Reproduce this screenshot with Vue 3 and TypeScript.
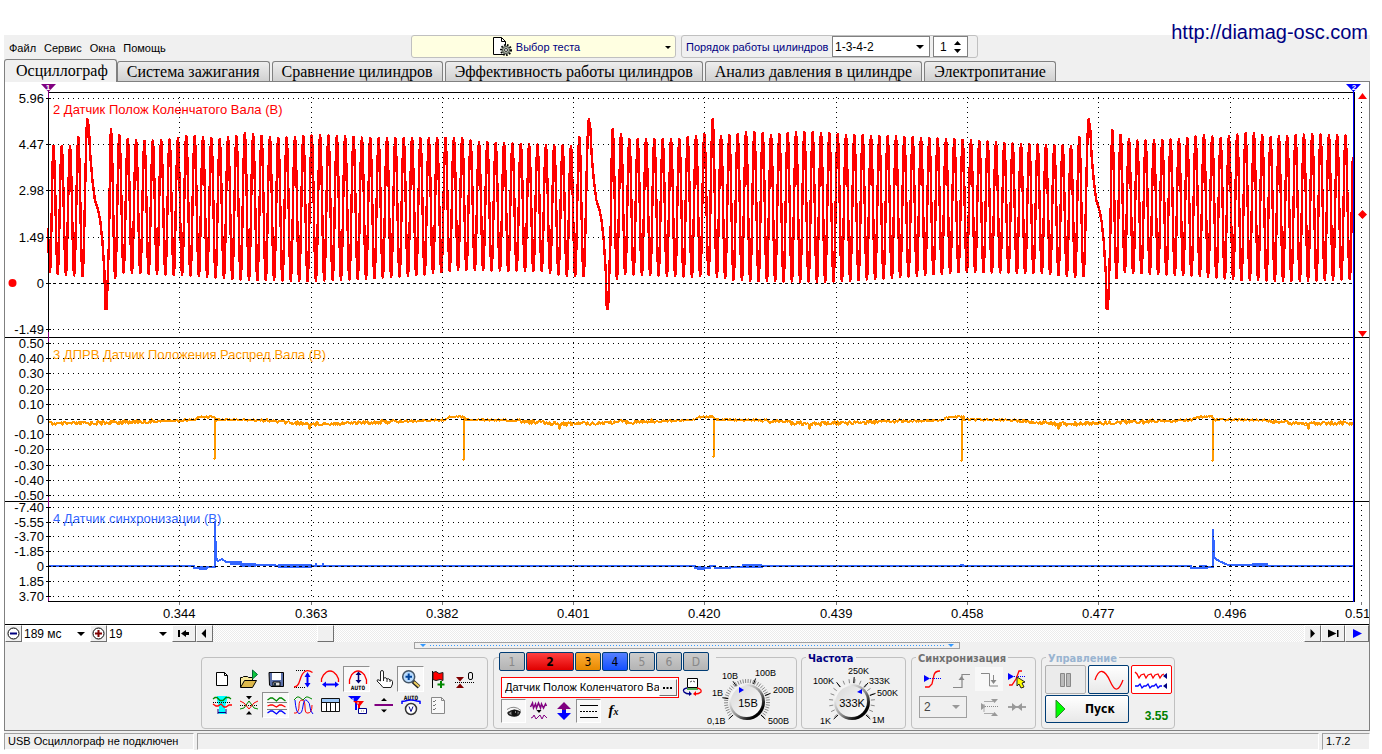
<script setup lang="ts">
import { ref } from 'vue'

type Point = [number, number]

const tabs = [
  'Осциллограф',
  'Система зажигания',
  'Сравнение цилиндров',
  'Эффективность работы цилиндров',
  'Анализ давления в цилиндре',
  'Электропитание',
]
const activeTab = ref(0)
const menus = ['Файл', 'Сервис', 'Окна', 'Помощь']

/* ---------- chart scales ---------- */
const left = 48
const right = 1354
const panels = [
  { top: 97, bottom: 334, zero: 283, ticks: [[98, '5.96'], [144, '4.47'], [190, '2.98'], [237, '1.49'], [283, '0'], [329, '-1.49']] },
  { top: 342, bottom: 499, zero: 419, ticks: [[343, '0.50'], [358, '0.40'], [373, '0.30'], [389, '0.20'], [404, '0.10'], [419, '0'], [434, '-0.10'], [449, '-0.20'], [465, '-0.30'], [480, '-0.40'], [495, '-0.50']] },
  { top: 505, bottom: 600, zero: 566, ticks: [[507, '-7.40'], [522, '-5.55'], [536, '-3.70'], [551, '-1.85'], [566, '0'], [581, '1.85'], [596, '3.70']] },
] as { top: number; bottom: number; zero: number; ticks: [number, string][] }[]
const times: [number, string][] = [
  [179, '0.344'], [311, '0.363'], [442, '0.382'], [573, '0.401'], [704, '0.420'],
  [836, '0.439'], [967, '0.458'], [1098, '0.477'], [1230, '0.496'], [1361, '0.51'],
]

/* ---------- signals ---------- */
const lerp = (table: Point[], x: number): number => {
  for (let i = 1; i < table.length; i++) {
    const [x0, y0] = table[i - 1]
    const [x1, y1] = table[i]
    if (x <= x1) return y0 + ((y1 - y0) * (x - x0)) / (x1 - x0)
  }
  return table[table.length - 1][1]
}
const highs: Point[] = [
  [48, 145], [71, 145], [78, 137], [87, 118], [111, 128], [119, 134], [128, 138], [140, 140], [165, 139], [178, 137],
  [186, 135], [195, 135], [220, 138], [236, 135], [245, 132], [262, 135], [280, 137], [320, 134], [370, 137], [462, 137],
  [475, 141], [530, 143], [571, 145], [579, 137], [588, 118], [613, 128], [621, 133], [629, 138], [680, 138], [704, 133],
  [722, 135], [738, 133], [746, 131], [756, 131], [772, 134], [800, 131], [830, 132], [845, 134], [885, 135], [950, 138],
  [1020, 143], [1071, 145], [1079, 137], [1088, 118], [1112, 129], [1121, 134], [1129, 138], [1140, 140], [1180, 138],
  [1203, 134], [1220, 137], [1245, 132], [1254, 132], [1270, 136], [1312, 133], [1354, 135],
]
const lows: Point[] = [
  [48, 273], [65, 276], [82, 277], [115, 279], [124, 273], [150, 275], [200, 277], [245, 281], [310, 282], [360, 280],
  [420, 276], [460, 271], [540, 272], [567, 277], [583, 277], [617, 280], [625, 275], [650, 276], [692, 278], [709, 276],
  [734, 281], [752, 282], [830, 283], [890, 279], [960, 273], [1040, 274], [1075, 278], [1083, 277], [1117, 279],
  [1125, 273], [1150, 275], [1200, 277], [1240, 281], [1300, 282], [1354, 280],
]
const peaks: number[] = [53.5, 61.7, 70, 78.3]
for (let k = 0; k <= 56; k++) peaks.push(111 + k * 8.363)
for (let k = 0; k <= 56; k++) peaks.push(612.7 + k * 8.332)
for (let k = 0; k <= 29; k++) peaks.push(1112.3 + k * 8.33)
const gaps = [87.4, 588.8, 1088.7]

const crankPath = (): string => {
  const pts: Point[] = [[48, 228], [49, 262], [50, 272]]
  const curve = (a: Point, b: Point) => {
    for (let i = 0; i <= 8; i++) {
      const t = (1 - Math.cos((Math.PI * i) / 8)) / 2
      pts.push([a[0] + ((b[0] - a[0]) * i) / 8, a[1] + (b[1] - a[1]) * t])
    }
  }
  let last: Point = [50, 272]
  peaks.forEach((x, i) => {
    const top: Point = [x, Math.abs(x - 713) < 3 ? 119 : lerp(highs, x) + 1]
    curve(last, top)
    const next = peaks[i + 1]
    const gap = gaps.find(g => g > x && next !== undefined && g < next)
    const lowX = x + 4.2
    const low: Point = [lowX, lerp(lows, lowX) - 1]
    curve(top, low)
    last = low
    if (gap !== undefined) {
      curve(low, [gap, 119])
      const drop: Point[] = [[1.5, 128], [3, 157], [5, 180], [7.5, 200], [11, 211], [13, 222], [15, 241], [17, 272], [18, 309], [19.3, 309], [20.6, 272]]
      drop.forEach(([dx, y]) => pts.push([gap + dx, y]))
      last = [gap + 20.8, 262]
    }
  })
  return 'M' + pts.filter(p => p[0] <= 1353).map(p => `${p[0].toFixed(1)} ${p[1].toFixed(1)}`).join('L')
}

const noise = (x: number): number => {
  const v = Math.sin(x * 12.9898) * 43758.5453
  return v - Math.floor(v) - 0.5
}
const camSpikes: Point[] = [[214, 459], [463, 460], [713, 457], [961, 461], [1212, 461]]
const camPath = (): string => {
  const pts: Point[] = []
  for (let x = 48; x <= 1353; x++) {
    const phase = (((x - 214.5) % 249.6) + 249.6) % 249.6
    const base = lerp([[0, 419.5], [40, 420], [96, 424], [130, 423], [200, 421], [228, 420], [234, 417], [249.6, 416.5]], phase)
    let y = base + noise(x) * (phase > 50 && phase < 190 ? 4 : 2)
    if (Math.round(phase) === 95 && x > 200) y = 429
    const spike = camSpikes.find(s => s[0] === x)
    pts.push([x + 0.5, y])
    if (spike) pts.push([x + 0.5, spike[1]], [x + 1, 420])
  }
  return 'M' + pts.map(p => `${p[0]} ${p[1].toFixed(1)}`).join('L')
}
const syncPath =
  'M48 566H194v2h13v-1h8V522L216 558L218 561L222 559L226 562L238 563L250 564.500H275V566H695v2h15v-2H715v2h15v-1h32v-1H961v-1h2v1H1191v2h16v-1h6V530L1214.500 558L1219 561L1228 565H1253V566H1353'
const syncBands = [[199, 8, 2], [230, 12, -3], [240, 16, -1], [278, 18, 0], [296, 16, 0], [315, 2, -1], [322, 2, -1], [697, 8, 2], [742, 20, 0], [1199, 8, 1], [1252, 16, -1]]
const redLine = crankPath()
const camLine = camPath()

/* ---------- toolbar ---------- */
const icons: Record<string, string> = {
  new: '<path d="M5.500 4.500h8l3 3v10h-11z" fill="#fff" stroke="#000"/><path d="M13.500 4.500v3h3" fill="none" stroke="#000"/>',
  open: '<path d="M2.500 19V9.500h2l1-1h4l1 1h4V12" fill="#f5e79a" stroke="#000"/><path d="M2.500 19.500l4-7h12l-4 7z" fill="#ddb84a" stroke="#000"/><path d="M14.500 2v9l5-4.500z" fill="#0ac83c" stroke="#063"/>',
  save: '<path d="M4 4.500h14.500v14H6L4.500 17z" fill="#5b6fa8" stroke="#000"/><path d="M7 5h9v7H7z" fill="#fff"/><path d="M8 14h7v4H8z" fill="#ddd" stroke="#000"/><path d="M9 15h2v3H9z" fill="#234"/>',
  rise: '<path d="M4 2.500h10M2 19.500h12" stroke="#000" stroke-dasharray="1 1"/><path d="M2 19q4 0 6-7t5-8.500q3-2 7.500 1" fill="none" stroke="#f00" stroke-width="1.300"/><path d="M15.500 6v11" stroke="#00f" stroke-width="2"/><path d="M12.500 9l3-5 3 5zM12.500 15l3 4.500 3-4.500z" fill="#00f"/>',
  span: '<path d="M2.500 14V11l2-4 3-3q3.500-2 7 0l3 3 2 4v3" fill="none" stroke="#f00" stroke-width="1.300"/><path d="M6 16.500h11" stroke="#00f" stroke-width="2"/><path d="M7 13.500l-4 3 4 3zM16 13.500l4 3-4 3z" fill="#00f"/>',
  auto: '<path d="M3.500 16v-4l2-5q6.500-8 13 0l2 5v4" fill="none" stroke="#f00" stroke-width="1.300"/><path d="M12.500 5v9" stroke="#007" stroke-width="1.500"/><path d="M9.500 7l3-3.500 3 3.500zM9.500 12l3 3.500 3-3.500z" fill="#007"/><text x="12" y="22" text-anchor="middle">AUTO</text>',
  hand: '<path d="M7.500 13V4q0-1.500 1.500-1.500T10.500 4v6q3-1 3.500 1 2-1 3 1 2-.5 2.500 1.500V16l-1.500 3.500h-8L8 17l-4-4q0-2 2-1z" fill="#fff" stroke="#222"/><path d="M10.500 10v3M14 11v3M17 12v2" stroke="#222"/>',
  zoom: '<path d="M13 13.500l6 5.500" stroke="#222" stroke-width="4"/><path d="M14 14l5 4.500" stroke="#f0d060" stroke-width="2"/><circle cx="8.700" cy="8.700" r="6" fill="#b9dcff" stroke="#456" stroke-width="1.500"/><path d="M8.700 5.500v6.500M5.500 8.700h6.500" stroke="#00449c" stroke-width="2"/>',
  flag: '<path d="M5.500 3v17" stroke="#000"/><path d="M6 4.500l3-1 3 2 4-1v8l-3-1-4 1-3-1z" fill="#f00" stroke="#222"/><path d="M14 13v7M10.500 16.500h7" stroke="#080" stroke-width="2"/>',
  zero: '<path d="M1 14.500h20" stroke="#000" stroke-dasharray="1 1"/><path d="M2 9h8l-4 4.500zM2 20h8l-4-4.500z" fill="#800000"/><rect x="14.500" y="4.500" width="4" height="7" rx="1.500" fill="none" stroke="#000"/>',
  band: '<path d="M6 2h10v4l-2 7v7H8v-7L6 6z" fill="#0ff"/><path d="M2 8.500h18" stroke="#000" stroke-dasharray="1 1"/><path d="M2 5l2-1.500h2l3 3h3l3-3h3l2 1.500" fill="none" stroke="#080" stroke-width="1.300"/><path d="M2 10l3 2h2l3-2 3 3h2l3-2h3" fill="none" stroke="#f00" stroke-width="1.300"/><path d="M7 15v5M15 15v5M7 18.500h8" stroke="#008"/>',
  cross: '<path d="M2 11.500h18" stroke="#000" stroke-dasharray="1 1"/><path d="M2 15l4-1 5-7 5 7 4 1" fill="none" stroke="#080"/><path d="M2 7l4 2 5 6 5-6 4-2" fill="none" stroke="#f00"/><path d="M8 2h6l-3 3.500zM8 20.500h6l-3-3.500z" fill="#000"/>',
  waves: '<path d="M2.500 8.500h19M2.500 15.500h19" stroke="#000" stroke-dasharray="1 1"/><g fill="none" stroke-width="1.300"><path d="M2.500 6l3-2h2l4 3 3-3h2l4 3" stroke="#080"/><path d="M2.500 12l3-1h2l4 2 3-2h2l4 2" stroke="#f00"/><path d="M2.500 19l3-2h2l4 3 3-3h2l4 3" stroke="#00f"/></g>',
  overlap: '<g fill="none"><path d="M2 6l3-3h2l4 3 3-3h2l4 2" stroke="#080"/><path d="M2 19h2q3-1 3-7t3-6q3 0 3 7t3 6q4 0 4-8" stroke="#f00"/><path d="M3 6q1 13 4 13.500T11 12t4-5.500T18 13t3 7" stroke="#00f"/></g>',
  table: '<path d="M2.500 4.500h18v13h-18z" fill="#fff" stroke="#111"/><path d="M3 5h17v3H3z" fill="#9cc8f8"/><path d="M3 8.500h17M7.500 8v9M11.500 8v9M16.500 8v9" stroke="#111"/>',
  marks: '<path d="M2 2h13l-4 5v9H9V8z" fill="#00f"/><path d="M7 7h11l-4 5v4h-2v-5z" fill="#f00"/><path d="M7 4v3M12 8v2" stroke="#fff"/><path d="M12.500 14.500h8v5h-8z" fill="#fff" stroke="#008"/><path d="M15 17h3" stroke="#888" stroke-dasharray="1 1"/>',
  line: '<path d="M1.500 11H20" stroke="#800080" stroke-width="2"/><path d="M8 7h6l-3-3zM8 15.500h6l-3 3z" fill="#000"/>',
  dial: '<text x="11" y="6" text-anchor="middle">AUTO</text><path d="M2 10V7.500l3-.5q6-2 12 0l3 .5V10" fill="none" stroke="#00f" stroke-width="1.500"/><circle cx="11" cy="15" r="5.500" fill="#fff" stroke="#333" stroke-width="1.500"/><path d="M9 12.500l2 5 2-5" fill="none" stroke="#008"/>',
  list: '<path d="M4.500 3.500h10l3 3v13h-13z" fill="#f8f8f8" stroke="#888"/><path d="M14.500 3.500v3h3" fill="none" stroke="#888"/><path d="M6 7l1 1 2-2M6 11l1 1 2-2M6 15l1 1 2-2" fill="none" stroke="#777"/>',
  testdoc: '<path d="M2.500 1.500h8l4 4v13h-12z" fill="#fff" stroke="#000"/><path d="M10.500 1.500v4h4" fill="none" stroke="#000"/><circle cx="15" cy="14" r="5" fill="#c8d4c0" stroke="#000" stroke-width="2" stroke-dasharray="1.500 1.500"/><circle cx="15" cy="14" r="3.500" fill="#b8c4b0" stroke="#444"/><circle cx="15" cy="14" r="1.500" fill="#fff" stroke="#333"/>',
  device: '<path d="M6.500 2.500h10v9h-10z" fill="#fff" stroke="#000"/><path d="M6 12h11v2H6z" fill="#5a5"/><path d="M9 6l2-1M12 5l2 1" stroke="#555"/><path d="M6 12q-5 1-3 4 2 2 6 2" fill="none" stroke="#008" stroke-width="1.300"/><path d="M8 15l3 3-3 2z" fill="#008"/><path d="M16 12q5 1 4 4-2 2-6 2" fill="none" stroke="#f00" stroke-width="1.300"/><path d="M15 15l-3 3 3 2z" fill="#f00"/>',
  eye: '<path d="M4 9.500q7-5 14 1" fill="none" stroke="#888"/><path d="M5 13q5-5 12-1-1 4-6 4-5 0-6-3z" fill="#999" stroke="#222" stroke-width="1.500"/><circle cx="11.500" cy="13" r="3.200" fill="#111"/><path d="M12 12h1" stroke="#fff"/>',
  smooth: '<path d="M2.500 7l2-4 1 5 2-4 1 4 2-5 2 5 1-4 2 4 2-4 1 2" fill="none" stroke="#800080" stroke-width="1.500"/><path d="M8.500 10h5l-2.500 3z" fill="#000"/><path d="M3 18l2-1 1-2 2 4 2-2 2-2 2 4 2-4 3 3" fill="none" stroke="#800080"/>',
  move: '<path d="M11 2l7 7h-5v3H9V9H4z" fill="#800080"/><path d="M11 20l7-7h-5v-3H9v3H4z" fill="#00f"/>',
  levels: '<path d="M2 5.500h18M2 17.500h18" stroke="#000"/><path d="M2 11.500h18" stroke="#000" stroke-dasharray="2 1"/>',
  trig: '<path d="M2 7l6 3.500L2 14z" fill="#00f"/><path d="M2 10.500h17" stroke="#00f" stroke-dasharray="1 1"/><path d="M3 19h4l3-3 2-9q1-4 6-4" fill="none" stroke="#f00" stroke-width="1.300"/>',
  up: '<path d="M3 19.500h9v-13h8" fill="none" stroke="#888" stroke-width="1.200"/><path d="M8.500 12l3-4 3 4z" fill="#888"/>',
  down: '<path d="M3 5.500h8.500v12.500H20" fill="none" stroke="#888"/><path d="M15.500 7v8" stroke="#888"/><path d="M12.500 12l3 4 3-4z" fill="#888"/>',
  trigset: '<path d="M2 5l6 3.500L2 12z" fill="#00f"/><path d="M2 8.500h18" stroke="#00f" stroke-dasharray="1 1"/><path d="M3 17h3l4-6 3-8h3" fill="none" stroke="#f00" stroke-width="1.300"/><path d="M11 9l8 5-3 1 2 4-3 1-2-4-2 2z" fill="#ff0" stroke="#222"/>',
  range: '<path d="M3 7l5 3.500L3 14zM13 3h7l-3.500 4zM13 20h7l-3.500-4z" fill="#999"/><path d="M6 5.500h10M6 17.500h10M6 8v8" stroke="#aaa"/><path d="M7 10.500h13" stroke="#888" stroke-dasharray="1 1"/>',
  squeeze: '<path d="M2 11h18" stroke="#888" stroke-width="1.500"/><path d="M6 7l5 4-5 4zM16 7l-5 4 5 4z" fill="#999"/>',
  pause: '<path d="M5.500 4.500h4v13h-4zM11.500 4.500h4v13h-4z" fill="#bbb" stroke="#888"/>',
}
const tools: [string, string][] = [
  ['new', 'Новый'], ['open', 'Открыть'], ['save', 'Сохранить'], ['rise', 'Фронт'], ['span', 'Период'],
  ['auto', 'Автомасштаб'], ['hand', 'Рука'], ['zoom', 'Лупа'], ['flag', 'Метка'], ['zero', 'Ноль'],
  ['band', 'Полоса'], ['cross', 'Центр'], ['waves', 'Раздельно'], ['overlap', 'Вместе'], ['table', 'Таблица'],
  ['marks', 'Маркеры'], ['line', 'Линия'], ['dial', 'Автодиапазон'], ['list', 'Список'],
]
const pressed = ref<string[]>(['auto', 'zoom', 'waves', 'eye', 'levels'])
const toggle = (name: string) => {
  pressed.value = pressed.value.includes(name) ? pressed.value.filter(n => n !== name) : [...pressed.value, name]
}
const channels = ['1', '2', '3', '4', '5', '6', 'D']
const channelTools: [string, string][] = [['eye', 'Показать'], ['smooth', 'Фильтр'], ['move', 'Сдвиг'], ['levels', 'Уровни']]

/* ---------- knobs ---------- */
const radial = (cx: number, cy: number, r0: number, r1: number, angles: number[]): string =>
  angles.map(a => {
    const t = (a * Math.PI) / 180
    return `M${(cx + r0 * Math.cos(t)).toFixed(1)} ${(cy + r0 * Math.sin(t)).toFixed(1)}L${(cx + r1 * Math.cos(t)).toFixed(1)} ${(cy + r1 * Math.sin(t)).toFixed(1)}`
  }).join('')
const fine = Array.from({ length: 40 }, (_, i) => 137 + i * 6.8)
const coarse = Array.from({ length: 18 }, (_, i) => 140 + i * 15.3)
const voltTicks = radial(747, 702, 19, 23, fine)
const voltMain = radial(747, 702, 19, 25, [137, 190, 236, 290, 340, 43])
const freqTicks = radial(852, 702, 19, 23, coarse)
const freqMain = radial(852, 702, 19, 25, [137, 232, 275, 310, 340, 43])
const volts: [number, number, string][] = [[707, 724, '0,1В'], [712, 696, '1В'], [722, 679, '10В'], [755, 676, '100В'], [773, 693, '200В'], [768, 724, '500В']]
const freqs: [number, number, string][] = [[820, 724, '1K'], [813, 684, '100K'], [848, 674, '250K'], [869, 684, '333K'], [877, 696, '500K'], [872, 723, '1M']]
</script>

<template>
  <div class="window">
    <a class="site" href="http://diamag-osc.com">http://diamag-osc.com</a>

    <header class="top">
      <nav class="menu">
        <button v-for="m in menus" :key="m" type="button">{{ m }}</button>
      </nav>
      <button class="test" type="button">
        <svg viewBox="0 0 22 22" v-html="icons.testdoc"></svg>
        <span>Выбор теста</span>
        <i class="caret"></i>
      </button>
      <div class="order">
        <label for="order">Порядок работы цилиндров</label>
        <span class="combo"><select id="order"><option>1-3-4-2</option></select><i class="caret"></i></span>
        <label class="spin">
          <input type="text" value="1" aria-label="Цилиндр" />
          <svg viewBox="0 0 9 16"><path d="M1 6h7L4.500 2zM1 10h7l-3.500 4z" /></svg>
        </label>
      </div>
    </header>

    <div class="tabs" role="tablist">
      <button v-for="(t, i) in tabs" :key="t" type="button" role="tab" :aria-selected="i === activeTab" :class="{ active: i === activeTab }" @click="activeTab = i">{{ t }}</button>
    </div>

    <main class="page">
      <svg class="chart" viewBox="5 82 1364 542">
        <text x="53" y="114" class="name red">2 Датчик Полож Коленчатого Вала (В)</text>
        <text x="53" y="359" class="name orange">3 ДПРВ Датчик Положения Распред Вала (В)</text>
        <text x="53" y="523" class="name blue">4 Датчик синхронизации (В)</text>

        <path :d="redLine" class="trace bold" stroke="#ff0000" />
        <path :d="camLine" class="trace" stroke="#ff9900" />
        <path :d="syncPath" class="trace" stroke="#3366ff" />
        <rect v-for="(b, i) in syncBands" :key="'b' + i" :x="b[0]" :y="564 + b[2]" :width="b[1]" height="4" fill="#3366ff" />

        <g class="crisp">
          <template v-for="(p, pi) in panels" :key="'p' + pi">
            <g v-for="t in p.ticks" :key="t[1] + t[0]">
              <line :x1="left + 5" :x2="right - 2" :y1="t[0] + 0.5" :y2="t[0] + 0.5" :class="t[0] === p.zero ? 'zero' : 'dots'" />
              <line :x1="46" :x2="51" :y1="t[0] + 0.5" :y2="t[0] + 0.5" stroke="#000" />
            </g>
            <line v-for="t in times" :key="'v' + t[0]" :x1="t[0] + 0.5" :x2="t[0] + 0.5" :y1="p.top" :y2="p.bottom" class="dots" />
          </template>
          <line v-for="t in times" :key="'x' + t[0]" :x1="t[0] + 0.5" :x2="t[0] + 0.5" y1="602" y2="605" stroke="#777" />
          <path d="M48 92.500H1354M5 337.500H1369M5 501.500H1369M48 601.500H1355M48.500 92V601M1354.500 92V602" stroke="#000" fill="none" />
          <path d="M48.500 91V98M48.500 332V342M48.500 497V507M48.500 597V601" stroke="#800080" />
          <path d="M1353.500 91V602" stroke="#0000ff" />
        </g>
        <g class="axis">
          <template v-for="(p, pi) in panels" :key="'l' + pi">
            <text v-for="t in p.ticks" :key="t[1]" x="44" :y="t[0] + 5" text-anchor="end">{{ t[1] }}</text>
          </template>
          <text v-for="t in times" :key="t[1]" :x="t[0] - 16" y="618">{{ t[1] }}</text>
        </g>
        <path d="M41 84H56L48.500 92z" fill="#800080" />
        <path d="M1346 84H1361L1353.500 92z" fill="#0000ff" />
        <text x="48" y="90" text-anchor="middle" class="mark">1</text>
        <text x="1354" y="90" text-anchor="middle" class="mark">2</text>
        <path d="M1358 99h9l-4.500-6zM1358 331h9l-4.500 6zM1362.500 210l4.500 4.500l-4.500 4.500l-4.500-4.500z" fill="#ff0000" />
        <circle cx="12.500" cy="283" r="4" fill="#ff0000" />
      </svg>

      <div class="scroll">
        <button class="sq" type="button" aria-label="Уменьшить">
          <svg viewBox="1 1 15 15"><circle cx="8.500" cy="8.500" r="5.500" fill="#fff" stroke="#000" /><path d="M5 8.500h7" stroke="#000080" stroke-width="2" /></svg>
        </button>
        <span class="pick span"><select aria-label="Длительность"><option>189 мс</option></select><i class="caret"></i></span>
        <button class="sq" type="button" aria-label="Увеличить">
          <svg viewBox="1 1 15 15"><circle cx="8.500" cy="8.500" r="5.500" fill="#fff" stroke="#000" /><path d="M5 8.500h7M8.500 5v7" stroke="#800000" stroke-width="2" /></svg>
        </button>
        <span class="pick num"><select aria-label="Масштаб"><option>19</option></select><i class="caret"></i></span>
        <button class="wide" type="button" aria-label="В начало"><svg viewBox="1 1 22 15"><path d="M6 5h2v7H6zM9 8.500l5-3.500v2h3v3h-3v2z" /></svg></button>
        <button class="sq" type="button" aria-label="Назад"><svg viewBox="1 1 15 15"><path d="M5.500 8.500L10 4v9z" /></svg></button>
        <div class="track"><button class="thumb" type="button" aria-label="Положение"></button></div>
        <button class="sq" type="button" aria-label="Вперёд"><svg viewBox="1 1 15 15"><path d="M11 8.500L6.500 4v9z" /></svg></button>
        <button class="wide" type="button" aria-label="В конец"><svg viewBox="1 1 22 15"><path d="M16 5h1.500v7H16zM15.500 8.500L7 4.500v8z" /></svg></button>
        <button class="wide" type="button" aria-label="Воспроизвести"><svg viewBox="1 1 22 15"><path d="M8 4l9 4.500-9 4.500z" fill="#0000ff" /></svg></button>
      </div>

      <div class="splitter"><i></i><b></b><i></i></div>

      <div class="controls">
        <section class="box tools">
          <button v-for="t in tools" :key="t[0]" type="button" class="tool" :aria-label="t[1]" :class="{ on: pressed.includes(t[0]) }" @click="toggle(t[0])">
            <svg viewBox="0 0 22 22" v-html="icons[t[0]]"></svg>
          </button>
        </section>

        <section class="box channel">
          <div class="side">
            <div class="chans">
              <button v-for="c in channels" :key="c" type="button" :class="'c' + c">{{ c }}</button>
            </div>
            <div class="sensor">
              <div class="field">
                <input type="text" value="Датчик Полож Коленчатого Вала" aria-label="Датчик" />
                <button type="button" aria-label="Выбрать датчик"><svg viewBox="0 0 15 15"><path d="M3 7h2v2H3zM6.500 7h2v2h-2zM10 7h2v2h-2z" /></svg></button>
              </div>
              <button type="button" class="plain" aria-label="Прибор"><svg viewBox="0 0 22 22" v-html="icons.device"></svg></button>
            </div>
            <div class="chtools">
              <button v-for="t in channelTools" :key="t[0]" type="button" class="tool" :aria-label="t[1]" :class="{ on: pressed.includes(t[0]) }" @click="toggle(t[0])">
                <svg viewBox="0 0 22 22" v-html="icons[t[0]]"></svg>
              </button>
              <button type="button" class="tool fx"><span>f</span><small>x</small></button>
            </div>
          </div>
          <svg class="knob" viewBox="704 660 92 67">
            <defs>
              <linearGradient id="rim" x1="0" y1="0" x2="1" y2="1"><stop offset="0.200" stop-color="#f4f4f4" /><stop offset="0.550" stop-color="#888" /><stop offset="0.800" stop-color="#000" /></linearGradient>
              <linearGradient id="face" x1="0" y1="0" x2="1" y2="1"><stop offset="0" stop-color="#d8d8d8" /><stop offset="1" stop-color="#ffffff" /></linearGradient>
            </defs>
            <path :d="voltTicks" stroke="#888" />
            <path :d="voltMain" stroke="#000" />
            <circle cx="747" cy="702" r="18" fill="url(#rim)" />
            <circle cx="746.500" cy="701.500" r="15.500" fill="url(#face)" />
            <path d="M739 687v6l5-3z" fill="#0000ff" />
            <text v-for="v in volts" :key="v[2]" :x="v[0]" :y="v[1]" class="scale">{{ v[2] }}</text>
            <text x="748" y="707" text-anchor="middle" class="value">15В</text>
          </svg>
        </section>

        <fieldset class="box freq">
          <legend>Частота</legend>
          <svg class="knob" viewBox="802 665 103 62">
            <path :d="freqTicks" stroke="#888" />
            <path :d="freqMain" stroke="#000" />
            <circle cx="852" cy="702" r="18" fill="url(#rim)" />
            <circle cx="851.500" cy="701.500" r="15.500" fill="url(#face)" />
            <path d="M857 692l5-3v5z" fill="#0000ff" />
            <text v-for="v in freqs" :key="v[2]" :x="v[0]" :y="v[1]" class="scale">{{ v[2] }}</text>
            <text x="852" y="707" text-anchor="middle" class="value">333K</text>
          </svg>
        </fieldset>

        <fieldset class="box sync">
          <legend>Синхронизация</legend>
          <div class="row">
            <button v-for="n in ['trig', 'up', 'down', 'trigset']" :key="n" type="button" class="tool" :class="n" :aria-label="n"><svg viewBox="0 0 22 22" v-html="icons[n]"></svg></button>
          </div>
          <div class="row">
            <span class="src"><select aria-label="Канал"><option>2</option></select><i class="caret"></i></span>
            <button v-for="n in ['range', 'squeeze']" :key="n" type="button" class="tool" :aria-label="n"><svg viewBox="0 0 22 22" v-html="icons[n]"></svg></button>
          </div>
        </fieldset>

        <fieldset class="box run">
          <legend>Управление</legend>
          <button type="button" class="off" aria-label="Пауза"><svg viewBox="0 0 22 22" v-html="icons.pause"></svg></button>
          <button type="button" class="single" aria-label="Один канал"><svg viewBox="0 0 36 24"><path d="M4 12Q7 3 11 3.500T19 13T26 21T32 12" fill="none" stroke="#f00" stroke-width="1.300" /></svg></button>
          <button type="button" class="many" aria-label="Все каналы">
            <svg viewBox="0 0 36 24"><path d="M1 4l2 2 2 4 2-3 3-1 2 4 2-3 3-1 2 4 2-3 3-1 2 4 2-3 2-1" fill="none" stroke="#f00" stroke-width="1.300" /><path d="M1 18h3l2-2 2 4 2-2h2l2-2 2 4 2-2h2l2-2 2 4 2-2h2" fill="none" stroke="#00f" stroke-width="1.300" /><path d="M33 5v6l-4-3zM33 15v6l-4-3z" fill="#000080" /></svg>
          </button>
          <button type="button" class="start"><svg viewBox="0 0 12 20"><path d="M1 1l9 9-9 9z" fill="#00ff00" stroke="#2a8a2a" /></svg>Пуск</button>
          <output>3.55</output>
        </fieldset>
      </div>
    </main>

    <footer class="status">
      <span class="dev">USB Осциллограф не подключен</span>
      <span class="mid"></span>
      <span class="ver">1.7.2</span>
    </footer>
  </div>
</template>

<style>
body { background: #ffffff; }
.tool text { font: bold 6px "DejaVu Sans Mono", monospace; fill: #000; }
</style>

<style scoped>
.window { position: relative; margin: 0 12px 0 4px; padding-top: 35px; font: 11px/14px "Liberation Sans", Arial, sans-serif; color: #000; }
.window * { box-sizing: border-box; }
button, input, select, fieldset, legend { font: inherit; color: inherit; margin: 0; padding: 0; border: 0; background: none; min-width: 0; }
select { appearance: none; width: 100%; }
svg { display: block; }
.caret { width: 0; height: 0; border: 4px solid transparent; border-top-color: #000; border-bottom: 0; flex: none; }
.site { position: absolute; right: 2px; top: 20px; font: 20px/24px "Liberation Sans", Arial, sans-serif; color: #000080; text-decoration: none; z-index: 1; }

.top { display: flex; height: 24px; background: #f0f0f0; align-items: flex-start; }
.menu { flex: 0 0 407px; display: flex; gap: 8px; padding: 6px 0 0 5px; }
.test { position: relative; width: 265px; height: 23px; display: flex; align-items: center; justify-content: center; gap: 3px; padding-right: 16px; background: #ffffe1; border: 1px solid #c0c0c0; border-radius: 3px; color: #000080; }
.test svg { width: 22px; height: 22px; }
.test .caret { position: absolute; right: 4px; top: 10px; border-width: 3px 3px 0; }
.order { display: flex; align-items: center; width: 297px; height: 23px; margin-left: 5px; padding-left: 4px; border: 1px solid #c0c0c0; border-radius: 3px; color: #000080; white-space: nowrap; }
.order > label:first-child { width: 146px; }
.combo { display: flex; align-items: center; width: 98px; height: 21px; padding: 0 5px 0 2px; border: 1px solid #808080; background: #fff; color: #000; font-size: 12px; }
.spin { display: flex; align-items: center; width: 35px; height: 21px; margin-left: 3px; padding: 0 5px 0 6px; border: 1px solid #808080; background: #fff; color: #000; font-size: 12px; }
.spin input { flex: 1; width: 0; }
.spin svg { width: 9px; height: 16px; }

.tabs { display: flex; align-items: flex-end; gap: 2px; height: 22px; background: #f0f0f0; font: 16px/18px "Liberation Serif", "Times New Roman", serif; }
.tabs button { height: 20px; padding: 0 9px; border: 1px solid #808080; border-bottom: 0; border-radius: 3px 3px 0 0; background: linear-gradient(#eeeeee, #d0d0d0); white-space: nowrap; }
.tabs .active { height: 23px; margin: 0 -2px -1px 0; padding: 0 8px 0 11px; background: #f0f0f0; z-index: 1; }

.page { border: 1px solid #808080; background: #f0f0f0; padding-bottom: 1px; }
.chart { width: 100%; height: auto; background: #fff; font-family: "Liberation Sans", Arial, sans-serif; }
.name { font-size: 13px; }
.red { fill: #ff0000; }
.orange { fill: #ff9900; }
.blue { fill: #3366ff; }
.axis { font-size: 13px; fill: #000; }
.mark { font-size: 8px; font-weight: bold; fill: #fff; }
.trace { fill: none; stroke-width: 2; stroke-linejoin: round; }
.trace.bold { stroke-width: 2.4; }
.crisp, .trace { shape-rendering: crispEdges; }
.dots { stroke: #000; stroke-dasharray: 1 4; }
.zero { stroke: #000; stroke-dasharray: 3 3; }

.scroll { display: flex; height: 18px; border-top: 1px solid #000; background: #f0f0f0; }
.sq, .wide, .thumb { flex: none; height: 17px; border: 1px solid; border-color: #fff #707070 #707070 #fff; background: #f0f0f0; }
.sq { width: 17px; }
.wide { width: 24px; }
.sq svg, .wide svg { width: 100%; height: 15px; }
.pick { display: flex; align-items: center; flex: none; background: #fff; padding: 0 5px 0 2px; font-size: 12px; }
.pick.span { width: 68px; }
.pick.num { width: 65px; }
.track { flex: 1; background: repeating-conic-gradient(#ffffff 0 25%, #ebebeb 0 50%) 0 0 / 2px 2px; }
.thumb { display: block; width: 17px; margin-left: 9.500%; }
.splitter { width: 40%; height: 7px; margin: 0 auto; padding: 0 5px; display: flex; align-items: center; gap: 4px; border: 1px solid #a0a0a0; }
.splitter i { width: 0; height: 0; border: 3px solid transparent; border-top-color: #3399ff; border-bottom: 0; }
.splitter b { flex: 1; height: 1px; background: repeating-linear-gradient(90deg, #3399ff 0 1px, transparent 1px 3px); }

.controls { display: flex; justify-content: center; margin-top: 8px; padding-left: 2px; }
.box { height: 72px; border: 1px solid #c0c0c0; border-radius: 4px; flex: none; }
.tools { width: 287px; display: grid; grid-template-columns: repeat(10, 27px); grid-auto-rows: 26px; padding: 8px 0 0 6px; }
.tool { display: flex; align-items: center; justify-content: center; }
.tool svg, .plain svg { width: 22px; height: 22px; flex: none; }
.on { border: 1px solid; border-color: #909090 #fff #fff #909090; background: #f8f8f8; }
.channel { width: 304px; margin-left: 5px; display: flex; }
.side { width: 214px; margin-top: -6px; padding-left: 5px; }
.chans { display: flex; gap: 1px; width: 217px; background: #f0f0f0; font-family: "DejaVu Sans Condensed", sans-serif; }
.chans button { width: 26px; height: 19px; border: 1px solid #003c74; border-radius: 2px; background: linear-gradient(#cccccc, #b4b4b4); color: #888; font-size: 12px; }
.chans .c2 { width: 48px; background: linear-gradient(#ff4040, #e00000); color: #000; font-weight: bold; }
.chans .c3 { background: linear-gradient(#ffae38, #e88a00); color: #000; }
.chans .c4 { background: linear-gradient(#5580ff, #1450ff); color: #000; }
.sensor { display: flex; align-items: center; gap: 2px; margin: 5px 0 1px 2px; height: 22px; }
.field { display: flex; width: 178px; height: 21px; border: 1px solid #ff0000; background: #fff; padding: 1px; }
.field input { flex: 1; width: 0; padding-left: 2px; }
.field button { width: 18px; border: 1px solid; border-color: #fff #707070 #707070 #fff; background: #f0f0f0; }
.field svg { width: 15px; height: 15px; }
.chtools { display: flex; padding-left: 2px; height: 24px; }
.chtools .tool { width: 25px; }
.fx { align-items: baseline; font: italic bold 15px/22px "Liberation Serif", serif; }
.fx small { font-size: 10px; }
.knob { flex: none; }
.channel .knob { width: 92px; height: 67px; margin: 2px 0 0 -4px; }
.freq .knob { width: 103px; height: 62px; }
.scale { font-size: 9px; }
.value { font-size: 11px; }
fieldset.box { position: relative; padding-top: 7px; }
legend { position: absolute; top: -6px; left: 4px; padding: 0 2px; background: #f0f0f0; font: bold 11px/13px "DejaVu Sans Condensed", sans-serif; }
.freq { width: 105px; margin-left: 4px; color: #000080; }
.freq svg { fill: #000; }
.sync { width: 125px; margin-left: 5px; }
.sync legend { color: #707070; }
.sync .row { display: flex; align-items: center; padding-left: 7px; height: 28px; }
.sync .tool { width: 28px; height: 24px; }
.sync .down { background: #f8f8f8; }
.src { display: flex; align-items: center; width: 48px; height: 22px; margin-right: 8px; padding: 0 6px 0 4px; border: 1px solid #a0a0a0; color: #444; font-size: 12px; }
.src .caret { border-top-color: #999; }
.run { width: 134px; margin-left: 5px; display: grid; grid-template-columns: 41px 41px 41px; grid-template-rows: 29px 28px; gap: 1px 2px; padding: 10px 0 0 3px; }
.run legend { color: #99b4d1; }
.run button { display: flex; align-items: center; justify-content: center; border: 1px solid #003c74; border-radius: 2px; background: linear-gradient(#ffffff, #e8e8e8); }
.run button.off { border-color: #b0b0b0; background: #ebebeb; }
.run button.many { border-color: #ff0000; background: #fff; }
.run .off svg { width: 22px; height: 22px; }
.run .single svg, .run .many svg { width: 36px; height: 24px; }
.run .start { grid-column: span 2; gap: 18px; font-family: "DejaVu Sans Condensed", sans-serif; font-weight: bold; font-size: 12px; justify-content: flex-start; padding-left: 9px; }
.start svg { width: 12px; height: 20px; }
output { align-self: end; text-align: center; padding-left: 10px; color: #008000; font: bold 12px/13px "Liberation Sans", Arial, sans-serif; }

.status { display: flex; gap: 3px; height: 19px; padding-top: 2px; background: #f0f0f0; white-space: nowrap; }
.status span { border: 1px solid; border-color: #a0a0a0 #fff #fff #a0a0a0; padding: 0 3px; line-height: 15px; }
.dev { width: 190px; }
.mid { flex: 1; }
.ver { width: 48px; }
</style>
